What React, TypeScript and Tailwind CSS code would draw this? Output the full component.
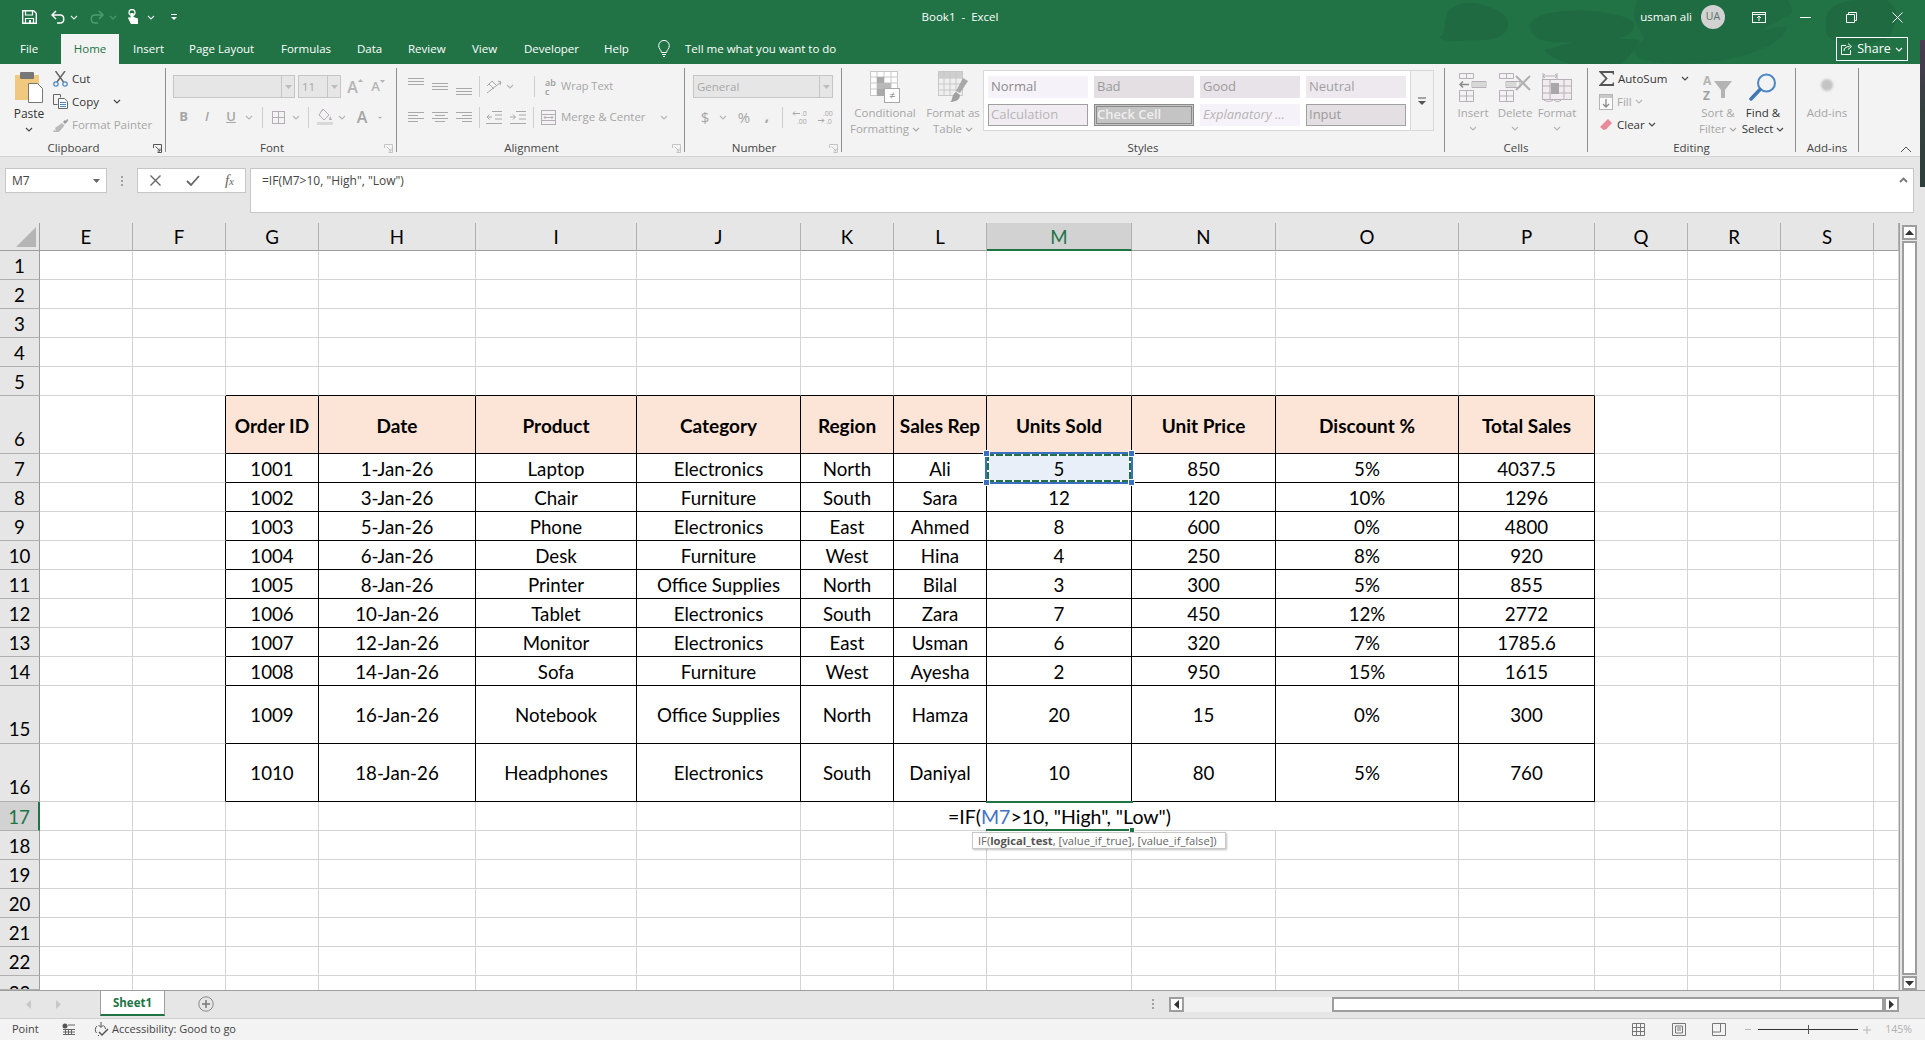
import React from "react";

function Chev({ c = "#666", className = "" }: { c?: string; className?: string }) {
  return (
    <svg width="8" height="5" viewBox="0 0 8 5" className={className}>
      <path d="M1 1l3 3 3-3" fill="none" stroke={c} strokeWidth="1.1" />
    </svg>
  );
}

function Slot({ w, children }: { w: string; children?: React.ReactNode }) {
  return <div className={`${w} flex h-full shrink-0 items-center justify-center`}>{children}</div>;
}

function VSep() {
  return <div className="h-[21px] w-px shrink-0 bg-[#cfcfcf]" />;
}

function Launcher({ c = "#b0b0b0" }: { c?: string }) {
  return (
    <svg width="9" height="9" viewBox="0 0 9 9">
      <path d="M.5 4V.5H8.500V8.500H4.500M2.500 2.500L7 7M4.500 7H7V4.500" fill="none" stroke={c} />
    </svg>
  );
}

function Group({ w, label, launcher, children }: { w: string; label: string; launcher?: string; children: React.ReactNode }) {
  return (
    <div className={`${w} relative flex h-[84px] shrink-0 flex-col border-r border-[#8f8f8f]`}>
      <div className="h-[72px]">{children}</div>
      <div className={`relative h-[12px] text-center leading-[16px] text-[#444] ${launcher ? "pr-[18px]" : ""}`}>
        {label}
        {launcher && (
          <span className="absolute right-[3px] top-[4px] flex">
            <Launcher c={launcher} />
          </span>
        )}
      </div>
    </div>
  );
}

function Combo({ w, text, children }: { w: string; text?: string; children?: React.ReactNode }) {
  return (
    <div className={`${w} flex h-[23px] shrink-0 items-center border border-[#c6c6c6] bg-[#e6e6e6] text-[#a6a6a6]`}>
      <div className="min-w-0 flex-1 pl-[3px]">{text}{children}</div>
      <div className="flex h-full w-[13px] items-center justify-center border-l border-[#c6c6c6]">
        <svg width="7" height="4" viewBox="0 0 7 4"><path d="M0 0h7L3.500 4z" fill="#bdbdbd" /></svg>
      </div>
    </div>
  );
}

function AlignIcon({ rows, widths = [16, 16, 16, 16], align = "left" }: { rows: number[]; widths?: number[]; align?: string }) {
  return (
    <svg width="16" height="14" viewBox="0 0 16 14">
      {rows.map((y, i) => {
        const w = widths[i];
        const x = align === "left" ? 0 : align === "right" ? 16 - w : (16 - w) / 2;
        return <rect key={i} x={x} y={y} width={w} height="1" fill="#a8a8a8" />;
      })}
    </svg>
  );
}

function GridIcon({ w, h }: { w: number; h: number }) {
  return (
    <svg width={w} height={h} viewBox={`0 0 ${w} ${h}`}>
      <rect x=".5" y=".5" width={w - 1} height={h - 1} fill="none" stroke="#b5adb5" />
      <path d={`M${w / 2} 0V${h}M0 ${h / 2}H${w}`} stroke="#b5adb5" />
    </svg>
  );
}

function BigButton({ w, icon, l1, l2, dim = true, chev = false }: { w: string; icon: React.ReactNode; l1: string; l2?: string; dim?: boolean; chev?: boolean }) {
  return (
    <div className={`${w} flex shrink-0 flex-col items-center whitespace-nowrap ${dim ? "text-[#a6a6a6]" : "text-[#333]"}`}>
      <div className="mt-[4px] flex h-[30px] items-center justify-center">{icon}</div>
      <div className="mt-[3px] h-[16px] leading-[16px]">{l1}</div>
      <div className="flex h-[16px] items-center gap-[3px] leading-[16px]">
        {l2}
        {chev && <Chev c={dim ? "#a6a6a6" : "#444"} />}
      </div>
    </div>
  );
}

function TitleBlobs() {
  return (
    <svg className="absolute left-[1430px] top-0" width="490" height="64" viewBox="0 0 490 64">
      <g fill="#1f6a41">
        <path d="M9 38c8-4 4-12 8-24 5-10 22-14 36-9 12 4 26 8 25 20-1 14-20 16-36 15-12 0-22 4-33-2z" />
        <path d="M100 24c4-10 30-15 60-13 25 2 40 6 44 13 2 8-12 16-30 17-24 2-30 2-42 1-22 2-34-8-32-18z" />
        <path d="M207 0h150c8 8 6 16-4 18-6 6-16 6-20 12 6 0 12-4 24-3-2 12-22 22-42 28-30 8-66 12-95 6-20-4-18-12-8-20 6-6-8-14-8-26 0-6 2-10 3-15z" opacity=".9" />
        <path d="M115 50c30-10 60-14 95-10-6 10-10 18-20 24h-50c-10-4-24-8-25-14z" />
        <path d="M398 12c6-8 18-12 30-12h28c14 8 12 20 6 30-2 12-14 10-22 14-16 2-44 0-44-14 0-8 0-14 2-18z" />
      </g>
    </svg>
  );
}

function TitleBar() {
  return (
    <div className="relative h-[64px] shrink-0 bg-[#217346] text-white">
      <TitleBlobs />
      <div className="relative grid h-[34px] w-[1920px] grid-cols-[1fr_auto_1fr] items-center">
        <div className="flex items-center pl-[22px]">
          <svg width="15" height="14" viewBox="0 0 15 14" className="mr-[14px]">
            <path d="M.7.7h11l2.600 2.600V13.300H.7z" fill="none" stroke="#fff" strokeWidth="1.400" />
            <path d="M3.500 1v4h7V1M3.500 13.300V8.500h8v4.800" fill="none" stroke="#fff" strokeWidth="1.200" />
            <rect x="7" y="10" width="2" height="3" fill="#fff" />
          </svg>
          <svg width="14" height="14" viewBox="0 0 14 14">
            <path d="M5 1L1 5l4 4M1.500 5H9c5 0 5 8 0 8H6" fill="none" stroke="#fff" strokeWidth="1.500" />
          </svg>
          <Chev c="#dfeee6" className="ml-[5px]" />
          <svg width="14" height="14" viewBox="0 0 14 14" className="ml-[12px]">
            <path d="M9 1l4 4-4 4M12.500 5H5c-5 0-5 8 0 8h3" fill="none" stroke="#4e9a72" strokeWidth="1.500" />
          </svg>
          <Chev c="#4e9a72" className="ml-[5px]" />
          <svg width="12" height="16" viewBox="0 0 12 16" className="ml-[10px]">
            <circle cx="5" cy="3.500" r="3" fill="none" stroke="#fff" strokeWidth="1.300" />
            <path d="M3.500 4v5L2 8 1 9l3 6h7V9.500L6.500 8V4z" fill="#fff" />
          </svg>
          <Chev c="#dfeee6" className="ml-[8px]" />
          <svg width="8" height="8" viewBox="0 0 8 8" className="ml-[15px]">
            <path d="M1 1.500h6" stroke="#fff" />
            <path d="M1 4h6L4 7z" fill="#fff" />
          </svg>
        </div>
        <div className="text-[11.5px]">Book1&nbsp; -&nbsp; Excel</div>
        <div className="flex items-center justify-end">
          <span className="text-[11.5px]">usman ali</span>
          <span className="ml-[9px] flex h-[24px] w-[24px] items-center justify-center rounded-full bg-[#d2d2d2] text-[10.5px] text-[#5c6f66]">UA</span>
          <svg width="14" height="11" viewBox="0 0 14 11" className="ml-[27px]">
            <rect x=".5" y=".5" width="13" height="10" fill="none" stroke="#fff" />
            <path d="M1 2.500h12M7 9V4.500M5 6l2-2 2 2" fill="none" stroke="#fff" />
          </svg>
          <div className="ml-[34px] h-px w-[11px] bg-white" />
          <svg width="11" height="11" viewBox="0 0 11 11" className="ml-[35px]">
            <path d="M.5 2.500h8v8h-8zM2.500 2.500V.5h8v8h-2" fill="none" stroke="#fff" />
          </svg>
          <svg width="11" height="11" viewBox="0 0 11 11" className="ml-[35px] mr-[17px]">
            <path d="M.5.5l10 10M10.500.5l-10 10" stroke="#fff" />
          </svg>
        </div>
      </div>
      <div className="relative flex h-[30px] items-end text-[11.500px]">
        <div className="flex h-[30px] w-[61px] items-center pl-[20px]">File</div>
        <div className="flex h-[30px] w-[58px] items-center justify-center bg-[#f3f3f3] text-[#217346]">Home</div>
        <div className="flex h-[30px] w-[70px] items-center pl-[14px]">Insert</div>
        <div className="flex h-[30px] w-[92px] items-center">Page Layout</div>
        <div className="flex h-[30px] w-[76px] items-center">Formulas</div>
        <div className="flex h-[30px] w-[51px] items-center">Data</div>
        <div className="flex h-[30px] w-[64px] items-center">Review</div>
        <div className="flex h-[30px] w-[52px] items-center">View</div>
        <div className="flex h-[30px] w-[80px] items-center">Developer</div>
        <div className="flex h-[30px] w-[54px] items-center">Help</div>
        <div className="flex h-[30px] items-center">
          <svg width="12" height="18" viewBox="0 0 12 18" className="mr-[15px]">
            <path d="M3.500 12.500C3 9.500.7 9 .7 5.700a5.300 5.300 0 0110.600 0c0 3.300-2.300 3.800-2.800 6.800zM4 14.500h4M5 16.500h2" fill="none" stroke="#fff" />
          </svg>
          Tell me what you want to do
        </div>
        <div className="absolute left-[1836px] top-[3px] flex h-[24px] w-[72px] items-center justify-center gap-[4px] border border-white text-[12.500px]">
          <svg width="12" height="12" viewBox="0 0 12 12">
            <path d="M5 2.500H.5v9h9V7M3 8c0-3 2-4.500 5.500-4.500M7 .5l3.500 3L7 6.500" fill="none" stroke="#fff" />
          </svg>
          Share
          <Chev c="#fff" />
        </div>
      </div>
    </div>
  );
}

function Clipboard() {
  return (
    <Group w="w-[166px]" label="Clipboard" launcher="#555">
      <div className="flex">
        <div className="flex w-[53px] shrink-0 flex-col items-center pl-[5px] text-[#333]">
          <svg width="30" height="31" viewBox="0 0 30 31" className="mt-[4px]">
            <rect x="1" y="3" width="24" height="25" fill="#f0c87e" />
            <rect x="6" y="0" width="14" height="7" rx="1" fill="#777" />
            <path d="M14.500 11.500h9l5 5v14h-14z" fill="#fff" stroke="#777" />
          </svg>
          <div className="mt-[3px] text-[12px] leading-[16px]">Paste</div>
          <Chev c="#444" className="mt-[5px]" />
        </div>
        <div className="-mt-[1px] flex flex-col text-[#333]">
          <div className="flex h-[23px] items-center">
            <svg width="15" height="16" viewBox="0 0 15 16" className="mr-[4px]">
              <path d="M4 11L12 0M10.500 11L2.500 0" stroke="#666" strokeWidth="1.500" />
              <circle cx="3" cy="13" r="2.200" fill="none" stroke="#4a86c8" strokeWidth="1.200" />
              <circle cx="12" cy="13" r="2.200" fill="none" stroke="#4a86c8" strokeWidth="1.200" />
            </svg>
            Cut
          </div>
          <div className="flex h-[23px] items-center">
            <svg width="15" height="15" viewBox="0 0 15 15" className="mr-[4px]">
              <path d="M.5.500h7v3M.5.500v10h4" fill="none" stroke="#666" />
              <path d="M5.500 4.500h6l3 3v7h-9z" fill="#fff" stroke="#666" />
              <path d="M7 8.500h6M7 10.500h6M7 12.500h6" stroke="#4a86c8" />
            </svg>
            Copy
            <Chev c="#444" className="ml-[14px]" />
          </div>
          <div className="flex h-[23px] items-center text-[#a6a6a6]">
            <svg width="16" height="14" viewBox="0 0 16 14" className="mr-[3px]">
              <path d="M9 5l2.500 2.500L6 14H0l1-2 2 .5-1-2.500z" fill="#bbb" />
              <path d="M10 4l2-2 1 1 1-2 1.500 1-1.500 2-1 1-1 1z" fill="#999" />
            </svg>
            Format Painter
          </div>
        </div>
      </div>
    </Group>
  );
}

function FontGroup() {
  return (
    <Group w="w-[231px]" label="Font" launcher="#c4c4c4">
      <div className="mt-[7px] flex h-[23px] items-center pl-[7px]">
        <Combo w="w-[122px]" />
        <div className="w-[3px]" />
        <Combo w="w-[43px]" text="11" />
        <Slot w="w-[26px]">
          <span className="ml-[2px] flex items-start text-[16px] font-semibold leading-none text-[#b4b4b4]">A<svg width="5" height="3" viewBox="0 0 5 3"><path d="M0 3l2.500-3L5 3z" fill="#b4b4b4" /></svg></span>
        </Slot>
        <Slot w="w-[22px]">
          <span className="flex items-start text-[13px] font-semibold leading-none text-[#b4b4b4]">A<svg width="5" height="3" viewBox="0 0 5 3"><path d="M0 0l2.500 3L5 0z" fill="#b4b4b4" /></svg></span>
        </Slot>
      </div>
      <div className="mt-[7px] flex h-[24px] items-center pl-[6px] text-[#a6a6a6]">
        <Slot w="w-[23px]"><span className="text-[13px] font-bold">B</span></Slot>
        <Slot w="w-[24px]"><span className="text-[13px] font-semibold italic">I</span></Slot>
        <Slot w="w-[24px]"><span className="text-[13px] font-semibold underline">U</span></Slot>
        <Slot w="w-[12px]"><Chev c="#b5b5b5" /></Slot>
        <Slot w="w-[14px]"><VSep /></Slot>
        <Slot w="w-[18px]"><GridIcon w={13} h={13} /></Slot>
        <Slot w="w-[17px]"><Chev c="#b5b5b5" /></Slot>
        <Slot w="w-[8px]"><VSep /></Slot>
        <Slot w="w-[26px]">
          <svg width="16" height="18" viewBox="0 0 16 18">
            <path d="M6 1l6 6-5 5-5-5zM4 4l2-3" fill="none" stroke="#b5adb5" />
            <path d="M13 8l2 4h-3z" fill="#b5adb5" />
            <rect x="0" y="14" width="16" height="3" fill="#d8d8d8" />
          </svg>
        </Slot>
        <Slot w="w-[8px]"><Chev c="#b5b5b5" /></Slot>
        <Slot w="w-[32px]"><span className="text-[16px] font-semibold text-[#a6a6a6]">A</span></Slot>
        <Slot w="w-[4px]"><Chev c="#444" /></Slot>
      </div>
    </Group>
  );
}

function AlignmentGroup() {
  const l = [2, 5, 8, 11];
  return (
    <Group w="w-[288px]" label="Alignment" launcher="#c4c4c4">
      <div className="mt-[7px] flex h-[23px] items-center pl-[7px] text-[#a6a6a6]">
        <Slot w="w-[24px]"><div className="-mt-[5px]"><AlignIcon rows={[1, 4, 7]} widths={[16, 16, 16]} /></div></Slot>
        <Slot w="w-[24px]"><AlignIcon rows={[3, 6, 9]} widths={[16, 16, 16]} /></Slot>
        <Slot w="w-[24px]"><div className="mt-[6px]"><AlignIcon rows={[5, 8, 11]} widths={[16, 16, 16]} /></div></Slot>
        <Slot w="w-[6px]"><VSep /></Slot>
        <Slot w="w-[24px]">
          <svg width="17" height="15" viewBox="0 0 17 15">
            <path d="M1 7l5-5 5 5M3 5l5 5M1 14L15 3M12 2l3 1-1 3" fill="none" stroke="#a8a8a8" />
          </svg>
        </Slot>
        <Slot w="w-[8px]"><Chev c="#b5b5b5" /></Slot>
        <div className="w-[20px]" />
        <VSep />
        <div className="w-[10px]" />
        <div className="flex w-[12px] flex-col text-[9px] font-semibold leading-[9px] text-[#9a9a9a]">
          <span>ab</span><span>c</span>
        </div>
        <span className="ml-[4px] -mt-[1px] text-[11px]">Wrap Text</span>
      </div>
      <div className="mt-[7px] flex h-[24px] items-center pl-[7px] text-[#a6a6a6]">
        <Slot w="w-[24px]"><AlignIcon rows={l} widths={[16, 10, 16, 10]} /></Slot>
        <Slot w="w-[24px]"><AlignIcon rows={l} widths={[16, 10, 16, 10]} align="center" /></Slot>
        <Slot w="w-[24px]"><AlignIcon rows={l} widths={[16, 10, 16, 10]} align="right" /></Slot>
        <Slot w="w-[6px]"><VSep /></Slot>
        <Slot w="w-[24px]">
          <svg width="16" height="13" viewBox="0 0 16 13"><path d="M6 .5h10M9 4h7M9 8h7M0 12.500h16M6 6H1M3.500 3.500L1 6l2.500 2.500" fill="none" stroke="#a8a8a8" /></svg>
        </Slot>
        <Slot w="w-[24px]">
          <svg width="16" height="13" viewBox="0 0 16 13"><path d="M6 .5h10M9 4h7M9 8h7M0 12.500h16M0 6h5M3 3.500L5.500 6 3 8.500" fill="none" stroke="#a8a8a8" /></svg>
        </Slot>
        <div className="w-[3px]" />
        <VSep />
        <div className="w-[7px]" />
        <svg width="15" height="15" viewBox="0 0 15 15">
          <rect x=".5" y=".5" width="14" height="14" fill="none" stroke="#b5adb5" />
          <path d="M0 4.500h15M0 10.500h15M3 7.500h9M4.500 6L3 7.500 4.500 9M10.500 6L12 7.500 10.500 9" fill="none" stroke="#b5adb5" />
        </svg>
        <span className="ml-[5px]">Merge &amp; Center</span>
        <Chev c="#b5b5b5" className="ml-[14px]" />
      </div>
    </Group>
  );
}

function NumberGroup() {
  return (
    <Group w="w-[157px]" label="Number" launcher="#c4c4c4">
      <div className="mt-[7px] pl-[8px]">
        <Combo w="w-[140px]" text="General" />
      </div>
      <div className="mt-[7px] flex h-[24px] items-center pl-[9px] text-[#a6a6a6]">
        <Slot w="w-[22px]"><span className="text-[15px]">$</span></Slot>
        <Slot w="w-[14px]"><Chev c="#b5b5b5" /></Slot>
        <Slot w="w-[28px]"><span className="text-[15px]">%</span></Slot>
        <Slot w="w-[18px]"><span className="-mt-[5px] text-[15px] font-bold leading-[10px]">,</span></Slot>
        <Slot w="w-[12px]"><VSep /></Slot>
        <Slot w="w-[25px]">
          <svg width="18" height="15" viewBox="0 0 18 15">
            <path d="M1 3.500h7M3 1.500L1 3.500l2 2" fill="none" stroke="#a8a8a8" />
            <text x="9" y="6" fontSize="7" fill="#a8a8a8">.0</text>
            <text x="5" y="14" fontSize="7" fill="#a8a8a8">.00</text>
          </svg>
        </Slot>
        <Slot w="w-[25px]">
          <svg width="18" height="15" viewBox="0 0 18 15">
            <text x="6" y="6" fontSize="7" fill="#a8a8a8">.00</text>
            <path d="M1 10.500h6M5 8.500l2 2-2 2" fill="none" stroke="#a8a8a8" />
            <text x="9" y="14" fontSize="7" fill="#a8a8a8">.0</text>
          </svg>
        </Slot>
      </div>
    </Group>
  );
}

function StyleCell({ className, text }: { className: string; text: string }) {
  return <div className={`flex h-[22px] w-[100px] items-center text-[13px] ${className}`}>{text}</div>;
}

function StylesGroup() {
  return (
    <Group w="w-[603px]" label="Styles">
      <div className="flex">
        <BigButton
          w="w-[86px]"
          l1="Conditional"
          l2="Formatting"
          chev
          icon={
            <svg width="30" height="32" viewBox="0 0 30 32">
              <rect x=".5" y=".5" width="27" height="24" fill="#fff" stroke="#c8c8c8" />
              <path d="M7 0v25M14 0v25M21 0v25M0 6h28M0 12h28M0 18h28" stroke="#c8c8c8" />
              <rect x="7" y="6" width="7" height="6" fill="#a9a9a9" />
              <rect x="7" y="12" width="14" height="6" fill="#b9b9b9" />
              <rect x="7" y="18" width="7" height="7" fill="#a9a9a9" />
              <rect x="14.500" y="17.500" width="15" height="14" fill="#fff" stroke="#a8a8a8" />
              <text x="19" y="28" fontSize="11" fill="#8e8e8e">≠</text>
            </svg>
          }
        />
        <BigButton
          w="w-[50px]"
          l1="Format as"
          l2="Table"
          chev
          icon={
            <svg width="30" height="32" viewBox="0 0 30 32">
              <rect x=".5" y=".5" width="24" height="24" fill="#efefef" stroke="#c8c8c8" />
              <rect x="1" y="1" width="23" height="6" fill="#cfcfcf" />
              <path d="M6 0v25M12 0v25M18 0v25M0 7h25M0 13h25M0 19h25" stroke="#c8c8c8" />
              <path d="M30 10l-8 12-4-2 7-13z" fill="#a9a9a9" />
              <path d="M12 31c3-1 1-7 6-10l4 3c0 5-5 7-10 7z" fill="#a0a0a0" />
            </svg>
          }
        />
        <div className="ml-[5px] mt-[2px] flex h-[61px] w-[451px] border border-[#d8d8d8] bg-white">
          <div className="flex w-[426px] flex-col gap-[6px] pl-[4px] pt-[5px]">
            <div className="flex gap-[6px]">
              <StyleCell className="bg-[#f6f2f9] pl-[3px] text-[#8b8b8b]" text="Normal" />
              <StyleCell className="bg-[#e3dfe3] pl-[3px] text-[#9b9b9b]" text="Bad" />
              <StyleCell className="bg-[#e8e3e8] pl-[3px] text-[#9b9b9b]" text="Good" />
              <StyleCell className="bg-[#eee9ef] pl-[3px] text-[#a0a0a0]" text="Neutral" />
            </div>
            <div className="flex gap-[6px]">
              <StyleCell className="border border-[#a0a0a0] bg-[#f0ecf2] pl-[2px] text-[#b5b5b5]" text="Calculation" />
              <StyleCell className="border-[3px] border-double border-[#8a8a8a] bg-[#c4c4c4] font-semibold text-[#efefef]" text="Check Cell" />
              <StyleCell className="bg-[#f6f2f9] pl-[3px] italic text-[#b5b5b5]" text="Explanatory ..." />
              <StyleCell className="border border-[#a0a0a0] bg-[#e3dfe3] pl-[2px] text-[#9b9b9b]" text="Input" />
            </div>
          </div>
          <div className="flex flex-1 items-center justify-center border-l border-[#d8d8d8] bg-[#f3f3f3]">
            <svg width="8" height="8" viewBox="0 0 8 8">
              <path d="M0 1h8" stroke="#555" />
              <path d="M0 4h8L4 8z" fill="#555" />
            </svg>
          </div>
        </div>
      </div>
    </Group>
  );
}

function CellsGroup() {
  const c = "#b8b0b8";
  return (
    <Group w="w-[143px]" label="Cells">
      <div className="flex pl-[7px] pt-[2px]">
        <div className="flex w-[42px] flex-col items-center text-[#a6a6a6]">
          <svg width="28" height="30" viewBox="0 0 28 30" className="mt-[3px]">
            <path d="M.5.5h14v5H.5zM7.500 0v6M13 8.500h14v6H13zM20 8v7M.5 17.500h14v11H.5zM.5 23h14M7.500 17v11" fill="none" stroke={c} />
            <rect x="13.500" y="9" width="13" height="5" fill="#d8d8d8" />
            <path d="M1 11.500h9M4 8.500l-3 3 3 3" fill="none" stroke="#8a8a8a" strokeWidth="1.500" />
          </svg>
          <div className="mt-[2px] leading-[16px]">Insert</div>
          <Chev c="#b5b5b5" className="mt-[5px]" />
        </div>
        <div className="flex w-[42px] flex-col items-center text-[#a6a6a6]">
          <svg width="32" height="30" viewBox="0 0 32 30" className="mt-[3px]">
            <path d="M.5.5h14v5H.5zM7.500 0v6M.5 17.500h14v11H.5zM.5 23h14M7.500 17v11M7 8.500h14v6H7z" fill="none" stroke={c} />
            <rect x="7.500" y="9" width="10" height="5" fill="#d8d8d8" />
            <path d="M17 3l14 14M31 3L17 17" stroke="#b0b0b0" strokeWidth="2" />
          </svg>
          <div className="mt-[2px] leading-[16px]">Delete</div>
          <Chev c="#b5b5b5" className="mt-[5px]" />
        </div>
        <div className="flex w-[42px] flex-col items-center text-[#a6a6a6]">
          <svg width="30" height="30" viewBox="0 0 30 30" className="mt-[3px]">
            <path d="M1 0v6M15 0v6M1 3h14M1 3l2-2M1 3l2 2M15 3l-2-2M15 3l-2 2" fill="none" stroke={c} />
            <rect x=".5" y="6.500" width="29" height="20" fill="#f0ecf0" stroke={c} />
            <path d="M8 6v21M22 6v21M0 13h30M0 20h30" stroke={c} />
            <rect x="9" y="10" width="8" height="11" fill="#a8a8a8" />
            <path d="M1 26c2 3 8 3 10 1M12 27c2 2 6 2 7 0" fill="none" stroke={c} />
          </svg>
          <div className="mt-[2px] leading-[16px]">Format</div>
          <Chev c="#b5b5b5" className="mt-[5px]" />
        </div>
      </div>
    </Group>
  );
}

function EditingGroup() {
  return (
    <Group w="w-[208px]" label="Editing">
      <div className="flex">
        <div className="-mt-[1px] flex w-[110px] shrink-0 flex-col pl-[11px] text-[#333]">
          <div className="flex h-[23px] items-center">
            <svg width="15" height="15" viewBox="0 0 15 15" className="mr-[4px]">
              <path d="M14.500 3.500V1H1.500l6 6.500-6 6.500h13v-2.500" fill="none" stroke="#555" strokeWidth="1.800" />
            </svg>
            AutoSum
            <Chev c="#444" className="ml-[14px]" />
          </div>
          <div className="flex h-[23px] items-center text-[#a6a6a6]">
            <svg width="14" height="16" viewBox="0 0 14 16" className="mr-[4px]">
              <rect x=".5" y=".5" width="13" height="15" fill="#fafafa" stroke="#b5b5b5" />
              <rect x="1" y="1" width="12" height="3" fill="#c8c8c8" />
              <path d="M7 5v8M4 10l3 3 3-3" fill="none" stroke="#8a8a8a" strokeWidth="1.300" />
            </svg>
            Fill
            <Chev c="#b5b5b5" className="ml-[3px]" />
          </div>
          <div className="flex h-[23px] items-center">
            <svg width="14" height="14" viewBox="0 0 14 14" className="mr-[4px]">
              <path d="M9 1l4 4-6 6.500-3 .5-3-3z" fill="#ea8a98" />
              <path d="M1 9.500l3 3" stroke="#fff" />
            </svg>
            Clear
            <Chev c="#444" className="ml-[3px]" />
          </div>
        </div>
        <BigButton
          w="w-[40px]"
          l1="Sort &"
          l2="Filter"
          chev
          icon={
            <svg width="30" height="28" viewBox="0 0 30 28">
              <text x="0" y="12" fontSize="12" fontWeight="700" fill="#b4b4b4">A</text>
              <text x="0" y="27" fontSize="12" fontWeight="700" fill="#a2a2a2">Z</text>
              <path d="M11 8h18l-7 9v8h-4v-8z" fill="#b4b4b4" />
            </svg>
          }
        />
        <div className="ml-[5px]">
          <BigButton
            w="w-[40px]"
            dim={false}
            l1="Find &"
            l2="Select"
            chev
            icon={
              <svg width="28" height="28" viewBox="0 0 28 28">
                <circle cx="17.500" cy="10" r="8.500" fill="none" stroke="#4a86c8" strokeWidth="2" />
                <path d="M11 16.500L2 26" stroke="#3f78b5" strokeWidth="3.500" strokeLinecap="round" />
              </svg>
            }
          />
        </div>
      </div>
    </Group>
  );
}

function AddinsGroup() {
  return (
    <Group w="w-[63px]" label="Add-ins">
      <div className="flex flex-col items-center text-[#a6a6a6]">
        <div className="mt-[11px] h-[12px] w-[12px] rounded-full bg-[#c4c4c4] blur-[1px]" />
        <div className="mt-[14px] leading-[16px]">Add-ins</div>
      </div>
    </Group>
  );
}

function Ribbon() {
  return (
    <div className="flex h-[93px] shrink-0 border-b border-[#d4d4d4] bg-[#f3f3f3] pt-[4px] text-[11.500px]">
      <Clipboard />
      <FontGroup />
      <AlignmentGroup />
      <NumberGroup />
      <StylesGroup />
      <CellsGroup />
      <EditingGroup />
      <AddinsGroup />
      <div className="flex flex-1 items-end justify-end pb-[3px] pr-[13px]">
        <svg width="12" height="7" viewBox="0 0 12 7"><path d="M1 6l5-5 5 5" fill="none" stroke="#555" /></svg>
      </div>
    </div>
  );
}

function FormulaBar() {
  return (
    <div className="flex h-[66px] shrink-0 items-start bg-[#e6e6e6] pl-[5px] pr-[11px] pt-[11px] text-[12px] text-[#444]">
      <div className="flex h-[25px] w-[102px] items-center justify-between border border-[#c6c6c6] bg-white pl-[6px] pr-[6px]">
        M7
        <svg width="7" height="4" viewBox="0 0 7 4"><path d="M0 0h7L3.500 4z" fill="#666" /></svg>
      </div>
      <div className="flex h-[25px] w-[30px] flex-col items-center justify-center gap-[2px]">
        <i className="h-[2px] w-[2px] bg-[#a0a0a0]" /><i className="h-[2px] w-[2px] bg-[#a0a0a0]" /><i className="h-[2px] w-[2px] bg-[#a0a0a0]" />
      </div>
      <div className="flex h-[25px] w-[109px] items-center justify-between border border-[#c6c6c6] bg-white pl-[12px] pr-[11px]">
        <svg width="11" height="11" viewBox="0 0 11 11"><path d="M.5.5l10 10M10.500.5l-10 10" stroke="#666" strokeWidth="1.400" /></svg>
        <svg width="14" height="11" viewBox="0 0 14 11"><path d="M1 6l4 4 8-9" fill="none" stroke="#666" strokeWidth="1.800" /></svg>
        <span className="font-['Liberation_Serif',serif] text-[15px] italic leading-none text-[#666]">f<span className="text-[11px]">x</span></span>
      </div>
      <div className="ml-[4px] flex h-[45px] flex-1 items-start justify-between border border-[#c6c6c6] bg-white pl-[11px] pr-[5px] pt-[3px] leading-[18px]">
        <span className="text-[#444]">=IF(M7&gt;10, "High", "Low")</span>
        <svg width="9" height="6" viewBox="0 0 9 6" className="mt-[5px]"><path d="M1 5l3.500-3.500L8 5" fill="none" stroke="#777" strokeWidth="1.800" /></svg>
      </div>
    </div>
  );
}

const headers = ["Order ID", "Date", "Product", "Category", "Region", "Sales Rep", "Units Sold", "Unit Price", "Discount %", "Total Sales"];
const rowsData: string[][] = [
  ["1001", "1-Jan-26", "Laptop", "Electronics", "North", "Ali", "5", "850", "5%", "4037.5"],
  ["1002", "3-Jan-26", "Chair", "Furniture", "South", "Sara", "12", "120", "10%", "1296"],
  ["1003", "5-Jan-26", "Phone", "Electronics", "East", "Ahmed", "8", "600", "0%", "4800"],
  ["1004", "6-Jan-26", "Desk", "Furniture", "West", "Hina", "4", "250", "8%", "920"],
  ["1005", "8-Jan-26", "Printer", "Office Supplies", "North", "Bilal", "3", "300", "5%", "855"],
  ["1006", "10-Jan-26", "Tablet", "Electronics", "South", "Zara", "7", "450", "12%", "2772"],
  ["1007", "12-Jan-26", "Monitor", "Electronics", "East", "Usman", "6", "320", "7%", "1785.6"],
  ["1008", "14-Jan-26", "Sofa", "Furniture", "West", "Ayesha", "2", "950", "15%", "1615"],
  ["1009", "16-Jan-26", "Notebook", "Office Supplies", "North", "Hamza", "20", "15", "0%", "300"],
  ["1010", "18-Jan-26", "Headphones", "Electronics", "South", "Daniyal", "10", "80", "5%", "760"],
];
const letters = ["E", "F", "G", "H", "I", "J", "K", "L", "M", "N", "O", "P", "Q", "R", "S", ""];
const stripeH = "bg-[repeating-linear-gradient(90deg,#217346_0_7px,#fff_7px_9px)]";
const stripeV = "bg-[repeating-linear-gradient(180deg,#217346_0_7px,#fff_7px_9px)]";

function Handle({ className }: { className: string }) {
  return <div className={`absolute h-[7px] w-[7px] border border-white bg-[#3a6fc4] ${className}`} />;
}

function Selection() {
  return (
    <div className="pointer-events-none absolute -bottom-[2px] -left-[2px] -right-[2px] -top-[2px] border-2 border-[#3a6fc4]">
      <div className={`absolute left-0 right-0 top-0 h-[2px] ${stripeH}`} />
      <div className={`absolute bottom-0 left-0 right-0 h-[2px] ${stripeH}`} />
      <div className={`absolute bottom-0 left-0 top-0 w-[2px] ${stripeV}`} />
      <div className={`absolute bottom-0 right-0 top-0 w-[2px] ${stripeV}`} />
      <Handle className="-left-[4px] -top-[4px]" />
      <Handle className="-right-[4px] -top-[4px]" />
      <Handle className="-bottom-[4px] -left-[4px]" />
      <Handle className="-bottom-[4px] -right-[4px]" />
    </div>
  );
}

function EditCell() {
  return (
    <>
      <span className="relative z-10 whitespace-nowrap pt-[2px] text-[19.500px]">
        =IF(<span className="text-[#4472c4]">M7</span>&gt;10, "High", "Low")
      </span>
      <div className="absolute -left-[1px] -right-[1px] -top-[1px] h-[2px] bg-[#217346]" />
      <div className="absolute -bottom-[1px] -left-[1px] -right-[1px] h-[2px] bg-[#217346]" />
      <div className="absolute -bottom-[3px] -right-[3px] h-[6px] w-[6px] border border-white bg-[#217346]" />
      <div className="absolute -left-[15px] top-[30px] z-20 flex h-[17px] w-[254px] items-center whitespace-nowrap border border-[#c8c8c8] bg-white pl-[5px] font-['Open_Sans',sans-serif] text-[11.200px] text-[#666] shadow-[1px_1px_2px_rgba(0,0,0,0.25)]">
        IF(<b className="text-[#555]">logical_test</b>, [value_if_true], [value_if_false])
      </div>
    </>
  );
}

function Sheet() {
  const cells: React.ReactNode[] = [];
  cells.push(
    <div key="corner" className="flex items-end justify-end border-b border-r border-[#9e9e9e] bg-[#e6e6e6] pb-[3px] pr-[3px]">
      <svg width="20" height="20" viewBox="0 0 20 20"><path d="M20 0v20H0z" fill="#b5b5b5" /></svg>
    </div>
  );
  letters.forEach((l, i) => {
    const sel = l === "M";
    cells.push(
      <div
        key={`h${i}`}
        className={`flex items-center justify-center pt-[2px] ${
          sel
            ? "border-b-2 border-r border-b-[#217346] border-r-[#b0b0b0] bg-[#d2d2d2] text-[#217346]"
            : "border-b border-r border-b-[#9e9e9e] border-r-[#b0b0b0] bg-[#e6e6e6]"
        }`}
      >
        {l}
      </div>
    );
  });
  for (let r = 1; r <= 23; r++) {
    const tall = r === 6 || r === 15 || r === 16;
    const sel = r === 17;
    const last = r === 23;
    cells.push(
      <div
        key={`r${r}`}
        className={`flex justify-center overflow-hidden ${tall ? "items-end pb-[4px]" : last ? "items-start pt-[8px]" : "items-center pt-[2px]"} ${
          sel
            ? "border-b border-r-2 border-b-[#b0b0b0] border-r-[#217346] bg-[#d2d2d2] text-[#217346]"
            : "border-b border-r border-b-[#b0b0b0] border-r-[#9e9e9e] bg-[#e6e6e6]"
        }`}
      >
        {r}
      </div>
    );
    for (let c = 0; c < 16; c++) {
      const inTable = r >= 6 && r <= 16 && c >= 2 && c <= 11;
      const key = `c${r}-${c}`;
      if (inTable) {
        const isHeader = r === 6;
        const val = isHeader ? headers[c - 2] : rowsData[r - 7][c - 2];
        const active = r === 7 && c === 8;
        cells.push(
          <div
            key={key}
            className={`relative flex items-center justify-center whitespace-nowrap border-b border-r border-black pt-[2px] ${
              isHeader ? "bg-[#fce4d6] text-[19px] font-bold" : active ? "z-10 bg-[#e8eff9]" : "bg-white"
            }`}
          >
            {val}
            {active && <Selection />}
          </div>
        );
      } else if (r === 17 && c === 8) {
        cells.push(
          <div key={key} className="relative z-10 flex items-center justify-center border-b border-[#d4d4d4] bg-white">
            <EditCell />
          </div>
        );
      } else {
        const blackRight = c === 1 && r >= 6 && r <= 16;
        const blackBottom = r === 5 && c >= 2 && c <= 11;
        const noRight = r === 17 && (c === 7 || c === 9);
        cells.push(
          <div
            key={key}
            className={`bg-white ${r === 23 ? "" : "border-b"} ${noRight ? "" : "border-r"} ${
              blackBottom ? "border-b-black" : "border-b-[#d4d4d4]"
            } ${blackRight ? "border-r-black" : "border-r-[#d4d4d4]"}`}
          />
        );
      }
    }
  }
  return (
    <div className="flex h-[767px] shrink-0 bg-[#e6e6e6]">
      <div className="grid w-[1899px] shrink-0 grid-cols-[40px_93px_93px_93px_157px_161px_164px_93px_93px_145px_144px_183px_136px_93px_93px_93px_25px] grid-rows-[28px_29px_29px_29px_29px_29px_58px_29px_29px_29px_29px_29px_29px_29px_29px_58px_58px_29px_29px_29px_29px_29px_29px_14px] font-['Lato',sans-serif] text-[18.700px] leading-none text-black">
        {cells}
      </div>
      <div className="flex flex-1 flex-col border-l border-[#9e9e9e] pl-[2px] pt-[2px]">
        <div className="flex h-[15px] w-[15px] items-center justify-center border-2 border-[#9e9e9e] bg-white">
          <svg width="9" height="5" viewBox="0 0 9 5"><path d="M0 5L4.500 0 9 5z" fill="#333" /></svg>
        </div>
        <div className="my-px w-[15px] flex-1 border-2 border-[#9e9e9e] bg-white" />
        <div className="flex h-[14px] w-[15px] items-center justify-center border-2 border-[#9e9e9e] bg-white">
          <svg width="9" height="5" viewBox="0 0 9 5"><path d="M0 0l4.500 5L9 0z" fill="#333" /></svg>
        </div>
      </div>
    </div>
  );
}

function SheetBar() {
  return (
    <div className="flex h-[29px] shrink-0 border-b border-t border-b-[#cfcfcf] border-t-[#9e9e9e] bg-[#e6e6e6]">
      <div className="flex w-[100px] items-center pl-[26px]">
        <svg width="6" height="9" viewBox="0 0 6 9"><path d="M5 0v9L0 4.500z" fill="#c8c8c8" /></svg>
        <svg width="6" height="9" viewBox="0 0 6 9" className="ml-[23px]"><path d="M1 0v9l5-4.500z" fill="#c8c8c8" /></svg>
      </div>
      <div className="flex h-[25px] w-[65px] items-center justify-center border-b-2 border-l border-r border-b-[#217346] border-l-[#9e9e9e] border-r-[#9e9e9e] bg-white font-['Open_Sans',sans-serif] text-[11.500px] font-bold text-[#217346]">
        Sheet1
      </div>
      <div className="flex items-center pb-[2px] pl-[33px]">
        <svg width="16" height="16" viewBox="0 0 16 16">
          <circle cx="8" cy="8" r="7.200" fill="none" stroke="#888" />
          <path d="M8 4v8M4 8h8" stroke="#777" strokeWidth="1.500" />
        </svg>
      </div>
      <div className="flex-1" />
      <div className="flex w-[17px] flex-col items-start justify-center gap-[2px] pb-[2px]">
        <i className="h-[2px] w-[2px] bg-[#a0a0a0]" /><i className="h-[2px] w-[2px] bg-[#a0a0a0]" /><i className="h-[2px] w-[2px] bg-[#a0a0a0]" />
      </div>
      <div className="mr-[26px] mt-[6px] flex h-[15px] w-[730px] bg-[#f1f1f1]">
        <div className="flex w-[15px] items-center justify-center border-2 border-[#9e9e9e] bg-white">
          <svg width="5" height="9" viewBox="0 0 5 9"><path d="M5 0v9L0 4.500z" fill="#333" /></svg>
        </div>
        <div className="w-[148px]" />
        <div className="flex-1 border-2 border-[#9e9e9e] bg-white" />
        <div className="flex w-[15px] items-center justify-center border-2 border-[#9e9e9e] bg-white">
          <svg width="5" height="9" viewBox="0 0 5 9"><path d="M0 0v9l5-4.500z" fill="#333" /></svg>
        </div>
      </div>
    </div>
  );
}

function StatusBar() {
  return (
    <div className="flex flex-1 items-center bg-[#f3f3f3] font-['Open_Sans',sans-serif] text-[11px] text-[#444]">
      <span className="ml-[12px] w-[50px]">Point</span>
      <svg width="13" height="13" viewBox="0 0 13 13">
        <circle cx="3" cy="3" r="2.500" fill="#555" />
        <path d="M6 2h7M1 6.500h12M1 9h12M1 11.500h12M3.500 6v6M6.500 6v6M9.500 6v6" stroke="#666" />
      </svg>
      <svg width="16" height="15" viewBox="0 0 16 15" className="ml-[18px]">
        <path d="M4 4a5 5 0 00-.5 7M8 0v5M5.500 3L8 5.500 10.500 3M6 14l-1-1M11 4a5 5 0 011.500 3" fill="none" stroke="#555" />
        <path d="M6 10l3 3 6-6" fill="none" stroke="#555" strokeWidth="1.500" />
      </svg>
      <span className="ml-[3px]">Accessibility: Good to go</span>
      <div className="flex-1" />
      <svg width="13" height="13" viewBox="0 0 13 13"><path d="M.5.5h12v12H.5zM.5 4.500h12M.5 8.500h12M4.500.5v12M8.500.5v12" fill="none" stroke="#777" /></svg>
      <svg width="14" height="13" viewBox="0 0 14 13" className="ml-[27px]"><path d="M.5.5h13v12H.5z" fill="none" stroke="#777" /><path d="M3.500 3h7v7h-7zM5 5h4M5 7h4" fill="none" stroke="#777" /></svg>
      <svg width="14" height="13" viewBox="0 0 14 13" className="ml-[26px]"><path d="M.5.5h13v12H.5zM.5 9h8V.5" fill="none" stroke="#777" /></svg>
      <div className="ml-[19px] h-px w-[6px] bg-[#b5b5b5]" />
      <div className="relative ml-[7px] flex h-[9px] w-[100px] items-center">
        <div className="h-px w-full bg-[#333]" />
        <div className="absolute left-[50px] top-0 h-[9px] w-px bg-[#555]" />
      </div>
      <svg width="8" height="8" viewBox="0 0 8 8" className="ml-[5px]"><path d="M4 0v8M0 4h8" stroke="#b5b5b5" /></svg>
      <span className="ml-[14px] mr-[13px] text-[10.500px] text-[#b0b0b0]">145%</span>
    </div>
  );
}

export default function App() {
  return (
    <div className="relative flex h-[1040px] w-[1925px] flex-col overflow-hidden bg-[#f3f3f3] font-['Open_Sans',sans-serif]">
      <TitleBar />
      <Ribbon />
      <FormulaBar />
      <Sheet />
      <SheetBar />
      <StatusBar />
      <div className="absolute right-0 top-[40px] h-[147px] w-[5px] bg-gradient-to-b from-[#4a3a52] via-[#33403d] to-[#2f3d3a]" />
    </div>
  );
}
